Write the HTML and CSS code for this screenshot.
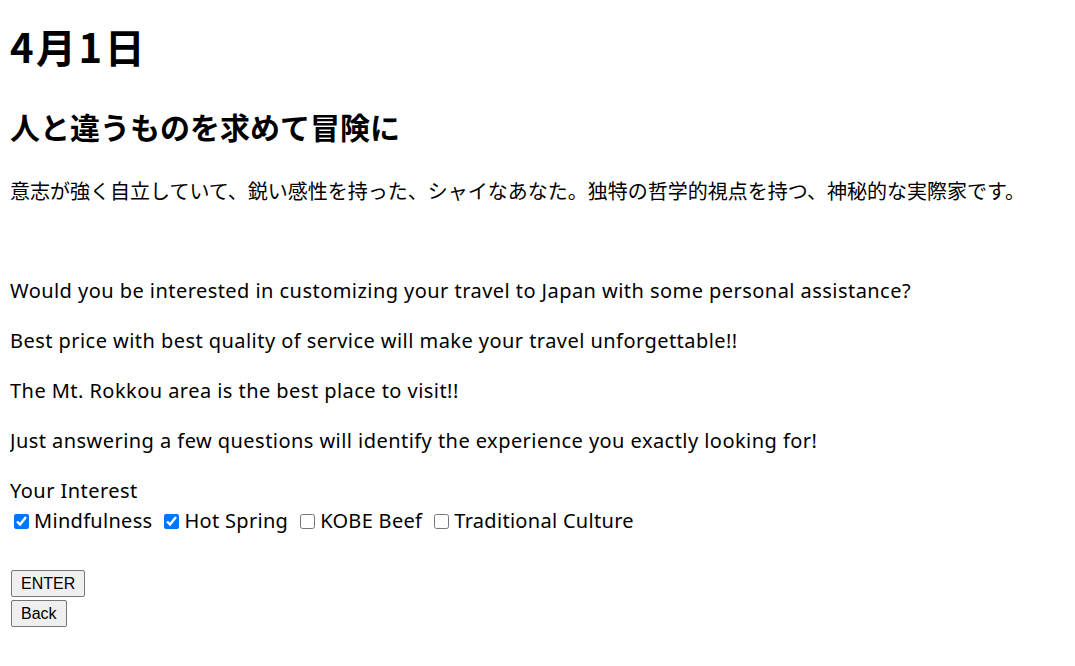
FILE: index.html
```html
<!DOCTYPE html>
<html lang="ja">
<head>
<meta charset="utf-8">
<title>4月1日</title>
<link rel="stylesheet" href="styles.css">
</head>
<body>
<h1 class="date">4月1日</h1>
<h2 class="title">人と違うものを求めて冒険に</h2>
<p class="lead">意志が強く自立していて、鋭い感性を持った、シャイなあなた。独特の哲学的視点を持つ、神秘的な実際家です。</p>
<br>
<p class="text">Would you be interested in customizing your travel to Japan with some personal assistance?</p>
<p class="text">Best price with best quality of service will make your travel unforgettable!!</p>
<p class="text">The Mt. Rokkou area is the best place to visit!!</p>
<p class="text">Just answering a few questions will identify the experience you exactly looking for!</p>
<form class="form">
  <div class="label">Your Interest</div>
  <div class="options">
    <label class="opt"><input type="checkbox" checked>Mindfulness</label>
    <label class="opt"><input type="checkbox" checked>Hot Spring</label>
    <label class="opt"><input type="checkbox">KOBE Beef</label>
    <label class="opt"><input type="checkbox">Traditional Culture</label>
  </div>
  <div class="spacer"></div>
  <div class="buttons">
    <button type="button" class="btn">ENTER</button>
    <button type="button" class="btn">Back</button>
  </div>
</form>
</body>
</html>
```
FILE: styles.css
```css
html, body {
  background: #fff;
}
body {
  margin: 8px 10px;
  font-family: "Noto Sans", "Noto Sans CJK JP", sans-serif;
  font-size: 20px;
  line-height: 30px;
  color: #000;
}
.date {
  font-family: "Noto Sans CJK JP", sans-serif;
  font-size: 40px;
  line-height: 60px;
  font-weight: bold;
  letter-spacing: 2.5px;
  margin: 8px 0 28px;
}
.title {
  font-family: "Noto Sans CJK JP", sans-serif;
  font-size: 30px;
  line-height: 45px;
  font-weight: bold;
  margin: 0 0 27px;
}
.lead {
  font-family: "Noto Sans CJK JP", sans-serif;
  margin: 20px 0;
}
.text {
  margin: 20px 0;
  letter-spacing: 0.45px;
}
.form {
  margin: 0;
}
.label {
  height: 30px;
  letter-spacing: 0.45px;
}
.options {
  height: 30px;
  display: flex;
  align-items: center;
  gap: 8px;
  letter-spacing: 0.3px;
}
.opt {
  display: inline-flex;
  align-items: center;
}
.opt input {
  width: 15px;
  height: 15px;
  margin: 0 5px 0 4px;
}
.spacer {
  height: 30px;
}
.buttons {
  display: flex;
  flex-direction: column;
  align-items: flex-start;
  gap: 3px;
  padding: 4px 0 0 1px;
}
.btn {
  font-family: "Liberation Sans", Arial, sans-serif;
  font-size: 16px;
  line-height: 19px;
  padding: 3px 9px;
  background: #efefef;
  border: 1px solid #767676;
  border-radius: 2px;
  color: #000;
}
```
